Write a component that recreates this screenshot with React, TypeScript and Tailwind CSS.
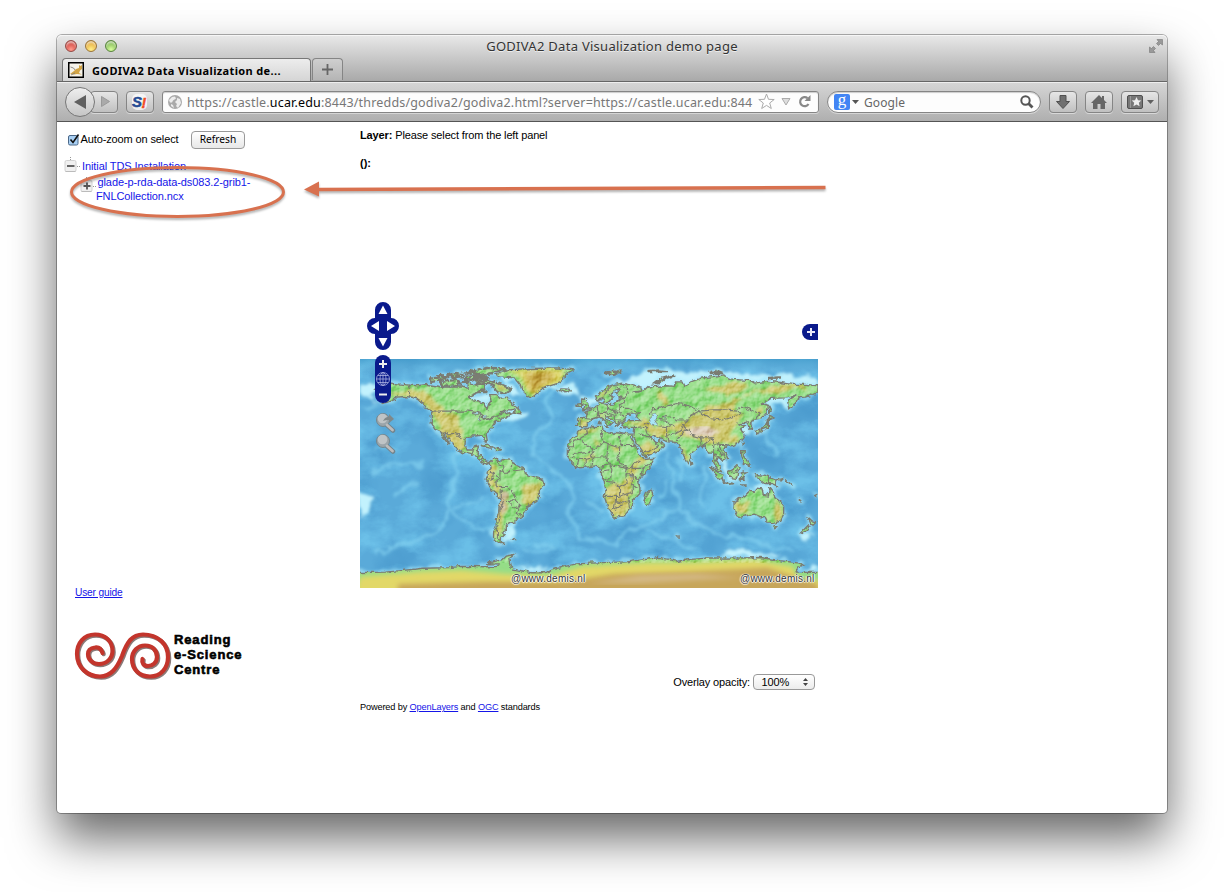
import React from "react";

const pts = (s: string) =>
  s.trim().split(/\s+/).map((p) => { const [x, y] = p.split(",").map(Number); return `${x},${-y}`; }).join(" ");

const LAND = [
  "-168,66 -162,67 -162,70 -156,71 -141,69.5 -134,69 -128,70 -115,68 -108,68 -100,68 -95,67 -95,72 -90,69 -82,69.5 -82,66.5 -87,64 -94,61 -94,58.5 -88,57 -82,55 -82,53 -80,51 -79,54.5 -77,57 -78,62 -73,62 -70,59 -65,60 -61,55.5 -56,52 -60,50 -66,50 -71,47 -65,48.5 -61,46 -66,43.5 -70,43.5 -70,41.5 -74,40.5 -76,37 -76,35 -81,31.5 -80,26 -81.5,25.5 -83,29 -85,30 -90,29.5 -94,29.5 -97,27.5 -97.5,22 -95,18.5 -91,18.5 -90,21 -87,21.5 -88,16 -84,15.5 -83.5,11 -80,9 -77.5,8.5 -79,7.5 -83,8 -86,10.5 -88,13 -93,15 -97,16 -102,18 -105.5,20 -106,23 -109,26 -113,31 -114.5,31 -112,27 -110,23.5 -112,25 -115,29 -117,33 -120.5,34.5 -124,40 -124,46.5 -123,49 -128,51 -131,55 -135,58.5 -139,60 -146,60.5 -151,60 -153,58 -158,56 -163,55 -158,58 -162,59 -165,61 -165,63 -161,64.5 -166,65",
  "-77.5,8 -75,11 -72,12 -71,10 -68,11 -62,10.5 -60,8.5 -55,6 -51,4 -50,0 -44,-2.5 -38,-4 -35,-6 -35,-9 -39,-13 -39,-18 -41,-22 -47,-25 -49,-28 -53,-34 -57,-35 -58,-38 -62,-39 -65,-41 -65,-45 -68,-46 -66,-48 -69,-51 -69,-54 -66,-55 -71,-55 -75,-51 -75,-46 -73,-42 -73,-37 -71,-30 -70,-20 -71,-18 -76,-14 -79,-8 -81,-5 -80,-2 -80,1 -77,4",
  "-17,21 -16,24 -13,28 -9.5,30 -9,33 -6,35.5 -2,35 3,37 10,37 11,34 15,32 20,31 22,33 30,31 34,31 33,28 37,21 39,16 43,12 44,11 51,12 49,7 42,-1 39,-6 40,-11 40,-15 35,-20 35,-24 32,-28 28,-33 20,-35 18,-32 15,-27 12,-18 13,-12 12,-6 9,-1 9,4 5,6 -2,5 -8,4.5 -13,8 -17,14",
  "-9,37 -9,43 -2,43.5 -1,46 -4,48.5 1,50 4,52 8,54 8,57 11,56 12,54 19,54.5 22,57 24,59 29,60 23,60 21,63 25,65.5 22,66 17,62 19,60 16,56 13,55.5 11,59 7,58 5,61 10,64 14,68 20,70 26,71 33,69.5 41,67 40,65 35,64 38,64 44,66 46,68 54,68.5 60,69 67,68.5 68,72 73,72 75,68 80,72 88,75 100,76.5 105,77.5 113,74 127,73 130,71 140,72.5 150,71.5 160,70 170,70 180,69 180,65 177,62.5 170,60 164,59.5 163,56 157,51 156,57 163,62 155,59.5 143,59 136,54.5 141,53 140,48 135,43.5 130,42.5 127,39 129,35 126,35 125,39 121,39.5 118,39 122,37 119,35 121,32 122,29 118,24 113,22 108,21.5 106,19 109,12 105,9 101,13 99.5,10 103,5 104,1.5 101,3 98,9 98,16 94,16 91,22.5 87,21.5 80,15.5 80,12 77.5,8 73,17 72,21 67,24.5 61,25 57,27 51,29 48,30 51,25 54,24 56,26 59.5,22.5 55,17.5 45,13 43,15 39,21 35,28 36,36 30,36.5 27,37 26,40 32,41.5 41,41.5 37,45 39,47 31,46.5 28,42 26,41 23,40 23,37 20,39 19,42 13,45.5 14,42 18,40 16,38 12,42 8,44.5 3,43 0,39.5 -3,36.7",
  "114,-22 114,-26 116,-34 119,-34.5 124,-33 130,-32 135,-34 138,-34 140,-38 146,-39 150,-37.5 153,-32 153,-26 149,-21 146,-19 145,-15 142,-11 141,-17 137,-16.5 136,-12 132,-11.5 129,-15 126,-14 122,-18",
  "-73,78 -65,81.5 -45,82.5 -25,83 -12,81.5 -19,78 -20,74 -24,71 -32,68.5 -40,65 -43,60 -48,61 -53,66 -54,70 -58,75 -68,76",
  "-180,-77.8 -160,-77.5 -150,-76.5 -130,-74.5 -110,-74 -100,-73 -80,-73.3 -73,-73 -71,-71 -81,-71 -75,-69.5 -68,-68 -65,-65 -58,-63.5 -63,-67 -62,-73 -60,-75 -45,-78 -35,-78 -25,-74.5 -10,-71 10,-70 30,-69.5 45,-67.5 55,-66 70,-69 80,-67.5 95,-66.3 115,-66.5 135,-66 150,-68.5 165,-70.5 169,-72 165,-74 163,-77.5 180,-77.8 186,-78 186,-96 -186,-96 -186,-78",
  "-24,65.5 -22,66.5 -15,66.3 -14,65 -19,63.5", "-5,50 1,51 0,54 -3,56 -2,58 -5,58.5 -5,54 -3,53", "-10,52 -6,52 -6,55 -9,54.5", "44,-25 43,-22 45,-16 49,-12.5 50,-16 47,-25",
  "131,31 131,34 136,35 140,38 140,42 142,45 145,43.5 141,42 141,36 137,34.5", "142,46 142,54 144,50", "80,9 80,6 82,7",
  "95,5.5 98,4 103,0 106,-5.5 102,-4", "105,-6.5 110,-7 114,-8 110,-8.5", "109,1 113,3 117,7 119,5 117,1 116,-4 111,-3", "119,-5 119,0 121,1 125,1.5 121,-1 123,-5 121,-3", "120,18 122,18 122,14 125,10 126,6 122,8 120,14", "131,-1 134,-1 138,-1.5 146,-5 148,-10 144,-8 138,-8 133,-4", "172,-34 175,-37 178,-38 175,-41", "172,-41 174,-42 169,-46.5 167,-46", "145,-41 148,-41 147,-43.5",
  "-85,22 -80,23 -74,20 -78,20", "-74,18 -73,20 -68,18.5", "-59,47.5 -56,51.5 -53,47", "118,-9 124,-9 120,-10", "178,-17 179,-16.5 179,-18", "147,-5 152,-4 150,-6", "154,-5 160,-9 161,-10", "165,-20 167,-22", "-60,-52 -58,-52 -59,-51", "69,-49 70,-49 70,-50", "120,22 121,25 121.5,24", "8,39 9,42 9.5,39", "12,37.5 15,38 15,37", "24,35.5 26,35",
];

const ARCTIC = [
  "-85,77 -92,80 -80,83 -65,82.5 -76,79", "-124,72 -125,74.5 -115,76 -110,75.5 -118,73", "-115,69 -117,72 -105,73.5 -101,69.5", "-90,74 -80,73.7 -72,71 -62,67 -65,63 -72,64 -74,66 -76,70 -88,71", "-98,74 -96,77 -85,76.5 -82,75", "-112,77 -104,79 -98,78 -104,76", "-86,64 -84,66 -80,64", "-99,72 -98,74 -92,73.5 -95,72",
  "-108,75 -104,76.5 -99,75.5", "-97,79 -92,81 -90,78.5", "-91,76 -82,78 -80,76", "-90,69 -86,73 -80,71", "-120,77 -116,77.5 -113,76",
  "52,71 56,74 67,77 60,75 55,71", "12,79 18,80 26,80 18,77", "46,80.5 55,81 62,80.5", "140,75 150,75.5 147,74.5", "95,79 100,81 105,79",
];

const LAKES = ["55,37 50,38 47,43 51,47 54,45 52,41", "-92,47 -88,48.5 -84,46.5 -88,46.5", "-87,42 -86,46 -85,42.5", "-84,46 -80,45 -82,43", "-83,42 -76,44 -79,42.5", "59,44 61,46 60,43", "32,-1 34,0 33,-3"];

const BORDERS = [
  "-141,69.5 -141,60 -135,59 -130,55", "-123,49 -95,49 -88,48 -84,46 -83,42 -79,43 -75,45 -71,45 -69,47", "-117,32.5 -111,31.3 -106,31.5 -101,29 -97,26", "-92,15 -91,18", "-89,14 -84,15", "-86,11 -83,11",
  "-78,1 -75,0 -70,-4 -70,1 -67,1 -67,6 -72,8 -72,11", "-67,1 -63,1 -60,5 -60,8", "-60,2 -52,3 -55,5", "-70,-4 -73,-7 -73,-10 -70,-11 -65,-11 -60,-14 -58,-18 -62,-22 -67,-22 -69,-18 -69,-12", "-58,-18 -57,-22 -54,-25 -58,-27 -63,-22", "-54,-25 -57,-30 -53,-33", "-67,-22 -70,-28 -70,-35 -72,-42 -72,-50 -69,-52", "-80,-3 -76,-5 -75,0",
  "-17,21 -12,21 -12,26 -8,27 -1,31 -2,35", "-8,27 3,19 12,24 9,31 10,34", "-12,15 -5,16 4,17", "12,24 15,23 24,20 25,31", "24,20 24,15 22,12 25,7 31,4", "24,22 37,22", "15,23 14,13 4,13 2,6", "14,13 16,7 10,5", "16,7 25,5 30,4 34,5 36,8 40,11", "36,8 34,4 42,4 48,8", "42,4 41,-1", "34,4 34,-1 39,-5", "30,4 29,-1 30,-8 24,-11 20,-7 13,-6", "29,-1 34,-1 34,-9 39,-11", "24,-11 24,-18 12,-18", "21,-18 20,-28 17,-29", "21,-22 26,-24 31,-22 30,-16 34,-15 34,-9", "26,-24 24,-26 20,-28", "31,-22 32,-27", "24,-18 30,-16", "16,7 18,3 17,-4 12,-5", "16,3 10,2", "-10,4 -8,11 -14,13", "-3,5 -3,11 2,12 4,17", "-8,11 -3,11",
  "-7,37 -7,42", "-2,43 3,42.5", "3,50 8,48 7,44", "6,53 7,50 8,48 13,48 15,51 14,54", "15,51 19,49.5 23,50 24,54", "13,48 17,47 22,48 29,45", "19,49 22,48 21,45 17,46 14,45", "21,45 20,42 28,42", "24,54 28,56 28,59", "24,52 31,52 35,49 40,48", "29,60 30,63 29,69", "21,69 24,66", "12,59 13,64 18,69",
  "48,46 50,51 55,51 61,53 69,55 77,54 83,51 87,49 80,45 78,42 69,42 66,44 58,45 55,42", "87,49 98,50 107,50 116,49 120,53 127,50 131,48 135,48 131,43", "87,49 91,46 96,43 105,42 111,44 120,47 117,49", "55,42 60,42 66,38 61,36 54,37", "78,42 74,38 78,35 81,30 88,28 97,28 98,24 102,22 108,22", "61,36 61,30 62,25", "61,30 67,31 72,34 74,38", "68,24 71,28 75,34 78,35", "44,40 48,39", "36,36 44,37 45,33 48,30", "39,32 45,29 48,29", "43,17 50,19 55,22 52,24", "88,28 89,22 92,24 97,28", "98,24 98,17 100,13", "102,22 105,17 107,12", "100,20 105,15 102,12", "124,40 129,42", "141,-3 141,-9", "109,1 115,1 117,4",
];

const HIGH = [
  "-164,64 -140,66 -128,64 -117,52 -103,46 -99,32 -97,18 -106,20 -118,34 -122,45 -128,53 -140,60",
  "-80,6 -73,8 -76,-3 -70,-14 -64,-20 -67,-30 -70,-52 -74,-48 -73,-30 -72,-18 -80,-7", "-50,-8 -38,-8 -40,-20 -48,-27 -52,-22",
  "12,-10 26,-8 34,6 42,16 44,8 34,-2 34,-18 28,-34 16,-34", "-8,35 9,37 3,32 -8,29", "38,22 45,12 58,20 48,24", "6,46 14,47 10,45", "26,40 44,42 52,36 64,38 62,26 50,30 44,36 36,37", "62,38 76,42 86,50 106,56 120,60 132,64 150,64 172,68 160,71 140,68 125,64 112,50 122,44 112,36 110,24 98,22 84,27 70,30", "6,60 18,68 12,60", "114,-22 128,-22 124,-31 116,-32", "57,68 61,52 56,54", "90,66 110,72 126,68 108,60", "-9,42 -2,42 -3,37 -7,37", "144,-18 153,-28 149,-38 146,-35",
  "2,27 10,24 8,20", "14,24 26,18 19,17", "-62,66 -76,73 -70,64", "105,30 118,30 119,25 106,24", "73,22 75,10 79,14", "130,50 138,52 136,46", "-6,16 4,14 0,10",
];

const RIDGES = [
  "-30,66 -34,56 -30,45 -42,30 -45,15 -25,0 -14,-10 -14,-35 -8,-50 20,-54", "-108,15 -104,0 -110,-20 -112,-36 -130,-52 -170,-63", "-110,-30 -90,-42 -77,-44", "60,15 66,2 67,-12 70,-25 55,-36 38,-45 18,-53", "70,-25 82,-38 105,-48 130,-52 160,-62", "90,5 89,-28", "-170,22 -152,18", "-178,-18 -176,-36", "140,35 142,22 147,13", "-2,-22 10,-30", "46,-44 70,-54 84,-60", "-177,51 -165,54", "58,-5 60,-15 55,-22", "72,12 73,-6", "-45,-54 -28,-57 -32,-61 -52,-60", "-135,-5 -152,-18", "-130,8 -170,2", "-80,-20 -108,-27",
];

const SHELVES = [
  "-180,69 -165,72 -170,60 -161,55 -180,62", "-69,-40 -58,-38 -60,-46 -58,-52 -67,-53", "20,72 50,81 85,80 115,79 150,77 180,75 180,68 70,66 40,66", "135,60 157,62 157,52 145,55 140,50", "98,12 106,8 108,-4 118,-6 116,2 110,4 108,10", "118,40 127,34 122,26 118,32", "128,-10 142,-8 145,-14 135,-18", "-95,62 -78,62 -78,52 -94,57", "-65,55 -45,46 -58,42 -68,41", "-5,50 9,57 4,60 -8,59", "112,-60 150,-64 145,-66 105,-65", "-60,78 -72,76 -58,68 -52,62 -62,62 -66,70", "163,-48 178,-46 170,-52", "-180,-15 -170,-20 -175,-30 -180,-35", "168,-76 180,-77 180,-73", "-35,68 -10,72 -8,60 -20,62", "-60,-73 -30,-74 -45,-78",
];

const SPIRAL = "M28.500 22C27 17 24 16 21 16.500C16 17 14 20 14 23C14 29 19 33 25 33C33 33 38.500 27 38.500 20C38.500 10 31 3.500 21 3.500C10 3.500 3 12 3 23C3 36 13 45.500 26 45.500C37 45.500 43 37 48 25C53 11 58 3.500 69 3.500C84 3.500 94 13 94 26C94 37 87 45.500 76 45.500C65 45.500 58 38 58 28C58 20 64 14.500 71 14.500C79 14.500 83 20 83 26C83 32 78 35 74 35C69.500 35 67.500 32 68.500 28";

function WorldMap() {
  const main = LAND.map((s, i) => <polygon key={i} points={pts(s)} />);
  const arctic = ARCTIC.map((s, i) => <polygon key={"a" + i} points={pts(s)} />);
  const polys = [...main, ...arctic];
  return (
    <svg className="absolute left-0 top-[64px] block h-[229px] w-[458px]" viewBox="-180 -90 360 180" preserveAspectRatio="none">
      <defs>
        <clipPath id="frame"><rect x="-180" y="-90" width="360" height="180" /></clipPath>
        <filter id="rough" x="-5%" y="-5%" width="110%" height="110%"><feTurbulence type="fractalNoise" baseFrequency=".24" numOctaves="3" seed="4" /><feDisplacementMap in="SourceGraphic" scale="4" xChannelSelector="R" yChannelSelector="G" /></filter>
        <filter id="soft"><feTurbulence type="fractalNoise" baseFrequency=".12" numOctaves="3" seed="8" result="n" /><feDisplacementMap in="SourceGraphic" in2="n" scale="9" xChannelSelector="R" yChannelSelector="G" /><feGaussianBlur stdDeviation="1.1" /></filter>
        <filter id="smooth" x="-5%" y="-20%" width="110%" height="140%"><feGaussianBlur stdDeviation="2" /></filter>
        <filter id="blur2"><feTurbulence type="fractalNoise" baseFrequency=".08" numOctaves="3" seed="2" result="n" /><feDisplacementMap in="SourceGraphic" in2="n" scale="11" xChannelSelector="R" yChannelSelector="G" /><feGaussianBlur stdDeviation="1.4" /></filter>
        <filter id="clouds" x="0" y="0" width="100%" height="100%" colorInterpolationFilters="sRGB"><feTurbulence type="fractalNoise" baseFrequency=".035 .05" numOctaves="5" seed="11" /><feColorMatrix values="0 0 0 0 .47  0 0 0 0 .81  0 0 0 0 .95  3 0 0 0 -1.2" /></filter>
        <filter id="deep" x="0" y="0" width="100%" height="100%" colorInterpolationFilters="sRGB"><feTurbulence type="fractalNoise" baseFrequency=".03" numOctaves="3" seed="31" /><feColorMatrix values="0 0 0 0 .26  0 0 0 0 .57  0 0 0 0 .78  0 2.8 0 0 -1.2" /></filter>
        <filter id="relief" x="0" y="0" width="100%" height="100%" colorInterpolationFilters="sRGB"><feTurbulence type="fractalNoise" baseFrequency=".13" numOctaves="4" seed="5" result="n" /><feColorMatrix in="n" values="0 0 0 0 0 0 0 0 0 0 0 0 0 0 0 1 0 0 0 0" /><feDiffuseLighting surfaceScale="2" lightingColor="#fff"><feDistantLight azimuth="225" elevation="33" /></feDiffuseLighting></filter>
        <mask id="landmask"><g fill="#fff" filter="url(#rough)">{polys}</g></mask>
        <linearGradient id="north" x2="0" y2="1"><stop offset="0" stopColor="#3f9ac9" stopOpacity=".6" /><stop offset="1" stopColor="#7cc8e8" stopOpacity="0" /></linearGradient>
      </defs>
      <g clipPath="url(#frame)">
        <rect x="-180" y="-90" width="360" height="180" fill="#5aaad9" />
        <rect x="-180" y="-90" width="360" height="180" filter="url(#deep)" opacity=".55" />
        <rect x="-180" y="-90" width="360" height="180" filter="url(#clouds)" opacity=".6" />
        <rect x="-180" y="-90" width="360" height="12" fill="url(#north)" />
        <g fill="none" stroke="#86d4f2" strokeWidth="2.600" opacity=".65" filter="url(#blur2)">{RIDGES.map((s, i) => <polyline key={i} points={pts(s)} />)}</g>
        <g fill="#c2f2fd" filter="url(#soft)">{SHELVES.map((s, i) => <polygon key={i} points={pts(s)} />)}</g>
        <g fill="none" stroke="#a8e8fa" strokeWidth="3" strokeLinejoin="round" filter="url(#soft)" opacity=".75">{polys}</g>
        <g mask="url(#landmask)">
          <rect x="-180" y="-90" width="360" height="180" fill="#95dd87" />
          <g fill="#d3c76c" filter="url(#soft)" opacity=".92">{HIGH.map((s, i) => <polygon key={i} points={pts(s)} />)}</g>
          <polygon filter="url(#soft)" fill="#ddcdba" points={pts("72,36 80,36 92,36 102,33 96,29 84,29")} />
          <polygon filter="url(#soft)" fill="#c4b38e" points={pts("-69,-13 -64,-18 -67,-28 -70,-32 -69,-20")} />
          <polygon filter="url(#smooth)" fill="#ded66a" points={pts("-66,82 -20,83 -20,72 -38,65 -43,60 -50,66 -54,76")} />
          <polygon filter="url(#smooth)" fill="#c6a845" points={pts("-50,79 -30,80 -27,75 -37,69 -44,64 -48,70")} />
          <polygon filter="url(#smooth)" fill="#e2d868" points={pts("-180,-81 -130,-77 -100,-76 -65,-79 -30,-80 -5,-73 45,-70 80,-70 130,-68 160,-73 165,-84 185,-84 185,-95 -185,-95")} />
          <polygon filter="url(#smooth)" fill="#c7a65a" points={pts("-150,-87 -80,-85 -20,-85 20,-79 80,-77 140,-74 158,-80 180,-87 180,-95 -150,-95")} />
          <polygon filter="url(#smooth)" fill="#d4b986" points={pts("0,-86 40,-80 85,-79 120,-82 80,-84 40,-86")} />
          <rect x="-180" y="-90" width="360" height="160" filter="url(#relief)" className="mix-blend-soft-light" opacity=".85" />
        </g>
        <g fill="#a8e4f5" stroke="#7c7f78" strokeWidth=".7" filter="url(#rough)">{LAKES.map((s, i) => <polygon key={i} points={pts(s)} />)}</g>
        <g fill="none" stroke="#7a7b72" strokeWidth="1.05" filter="url(#rough)">
          {main}
          <g strokeWidth="1.900" strokeDasharray="5 .7">{arctic}</g>
          {BORDERS.map((s, i) => <polyline key={"b" + i} points={pts(s)} strokeWidth=".85" />)}
        </g>
      </g>
    </svg>
  );
}

function Magnifier({ arrow }: { arrow?: boolean }) {
  return (
    <svg width="21" height="22" viewBox="0 0 21 22" className="block">
      <path d="M12 13l6 5.500" stroke="#71838c" strokeWidth="4.500" strokeLinecap="round" />
      <circle cx="8" cy="8" r="6.500" fill="#9ba5aa" stroke="#74868e" />
      <circle cx="7.500" cy="6.500" r="4.800" fill="#bfc4c6" />
      <path d="M12 13l5.500 5" stroke="#bcbcbc" strokeWidth="2.800" strokeLinecap="round" />
      {arrow && <path d="M8 9c2-4 4-4 6-4V2l5 5-5 4V8c-3 0-4 0-6 1z" fill="#7f8889" />}
    </svg>
  );
}

function Mark({ className }: { className: string }) {
  return <div className={"absolute font-['Liberation_Sans',sans-serif] text-[10px] leading-[12px] tracking-[.25px] text-[#333] [text-shadow:0_0_1px_#fff,1px_0_1px_#fff,0_1px_1px_#fff,-1px_0_1px_#fff] " + className}>@www.demis.nl</div>;
}

const btn = "flex h-[22px] items-center justify-center rounded-[4px] border border-[#858585] bg-gradient-to-b from-[#e6e6e6] to-[#c0c0c0] shadow-[0_1px_0_#d8d8d8]";

function TreeBox({ plus }: { plus?: boolean }) {
  return (
    <svg width="17" height="16" viewBox="0 0 17 16" className="block shrink-0">
      <path d="M6.500 0v3M13 9.500h4" stroke="#999" strokeDasharray="1 1" />
      <rect x="1" y="3.500" width="11" height="11" rx="1.500" fill="#f0f0f0" stroke="#d2d2d2" />
      <path d="M1.500 14.500h10" stroke="#bbb" />
      <path d={plus ? "M3.500 9h7M7 5.500v7" : "M3 9h7.500"} stroke="#555" strokeWidth="1.800" />
    </svg>
  );
}

export default function App() {
  return (
    <div className="h-[892px] w-[1224px] overflow-hidden bg-white pl-[57px] pt-[35px] font-['Liberation_Sans',sans-serif] text-[11px] text-black">
      <div className="relative h-[778px] w-[1110px] rounded-t-[5px] rounded-b-[4px] bg-white shadow-[0_0_0_1px_rgba(0,0,0,.3),0_25px_48px_rgba(0,0,0,.6)]">
        <header className="flex h-[47px] flex-col rounded-t-[5px] border-b border-[#666] bg-gradient-to-b from-[#e9e9e9] to-[#a9a9a9] font-['Noto_Sans',sans-serif] shadow-[inset_0_1px_0_#f6f6f6]">
          <div className="grid h-[24px] grid-cols-[1fr_auto_1fr] items-center">
            <div className="flex gap-[8px] pb-[2px] pl-[8px]">
              <i className="size-[12px] rounded-full border border-[#934a45] bg-[radial-gradient(circle_at_50%_85%,#ff9c8e,#dc5850_55%,#a8423b)] shadow-[inset_0_2px_2px_#ffffff99]" />
              <i className="size-[12px] rounded-full border border-[#9a7538] bg-[radial-gradient(circle_at_50%_85%,#fff08c,#ebb648_60%,#b47f28)] shadow-[inset_0_2px_2px_#ffffff99]" />
              <i className="size-[12px] rounded-full border border-[#59843e] bg-[radial-gradient(circle_at_50%_85%,#d9ff9f,#8fc460_60%,#5b9038)] shadow-[inset_0_2px_2px_#ffffff99]" />
            </div>
            <div className="pt-[1px] text-[13px] tracking-[.28px] text-[#333] [text-shadow:0_1px_0_#eee]">GODIVA2 Data Visualization demo page</div>
            <svg className="mb-[2px] ml-auto mr-[4px]" width="14" height="14" viewBox="0 0 14 14"><path d="M8 .500h5.500V6l-2-1.500-2 2-2-2 2-2zM.500 8l2 1.500 2-2 2 2-2 2L6 13.500H.500z" fill="#999" stroke="#777" strokeWidth=".6" /></svg>
          </div>
          <div className="flex h-[23px] pl-[5px]">
            <div className="relative -mb-px flex h-[23px] w-[249px] items-center rounded-t-[4px] border border-b-0 border-[#777] bg-gradient-to-b from-[#ededed] to-[#d5d5d5] pl-[5px]">
              <svg width="16" height="16" viewBox="0 0 16 16"><rect x=".75" y=".75" width="14.500" height="14.500" fill="#f6f3ea" stroke="#000" strokeWidth="1.500" /><path d="M2 12l4-3 2-2 3-1V3l1.500 1L14 3v4l-2 1.500-1 2.500 3 1.500-5-.5-3 .5z" fill="#d2a445" /><path d="M2.500 5l3 1 1.500 2M3 13l4-2" fill="none" stroke="#777" strokeWidth=".8" /></svg>
              <span className="ml-[8px] whitespace-nowrap pt-[1px] text-[11px] font-bold tracking-[.36px]">GODIVA2 Data Visualization de...</span>
            </div>
            <div className="ml-[1px] flex h-[22px] w-[31px] items-center justify-center rounded-t-[4px] border border-b-0 border-[#858585] bg-gradient-to-b from-[#cfcfcf] to-[#b5b5b5]">
              <svg width="11" height="11"><path d="M5.500 0v11M0 5.500h11" stroke="#666" strokeWidth="1.800" /></svg>
            </div>
          </div>
        </header>
        <div className="flex h-[40px] items-center border-b border-[#555] bg-gradient-to-b from-[#d6d6d6] to-[#afafaf] pl-[8px] font-['Noto_Sans',sans-serif] shadow-[inset_0_1px_0_#eee]">
          <div className="relative z-10 flex size-[30px] shrink-0 items-center justify-center rounded-full border border-[#777] bg-gradient-to-b from-[#eee] to-[#c5c5c5]">
            <svg width="12" height="14"><path d="M12 0v14L0 7z" fill="#606060" /></svg>
          </div>
          <div className={btn + " -ml-[5px] w-[28px] shrink-0 pl-[3px]"}><svg width="9" height="11"><path d="M.5.5v10L8.500 5.500z" fill="#aaa" stroke="#999" /></svg></div>
          <div className={btn + " ml-[8px] w-[28px] shrink-0"}>
            <svg width="18" height="16" viewBox="0 0 18 16"><rect x="1" width="15" height="16" rx="5" fill="#fff" opacity=".7" /><text x="1" y="13" fontFamily="Liberation Sans" fontWeight="700" fontStyle="italic" fontSize="15" fill="#254b93" stroke="#254b93" strokeWidth=".5">S</text><text x="10.500" y="14" fontFamily="Liberation Sans" fontWeight="700" fontStyle="italic" fontSize="14" fill="#f04d25" stroke="#f04d25" strokeWidth=".5">!</text></svg>
          </div>
          <div className="ml-[8px] flex h-[22px] w-[657px] shrink-0 items-center rounded-[3px] border border-[#858585] bg-[#fdfdfd] pl-[5px] shadow-[inset_0_1px_1px_#ccc,0_1px_0_#d5d5d5]">
            <svg width="14" height="14" viewBox="0 0 14 14" className="shrink-0"><circle cx="7" cy="7" r="7" fill="#aaa" /><path d="M1 5l3-3 3-.5 1 2-3 2-1 2-2 0zM9 3l3 1 1 4-3 5-2-2 1-2-2-2 2-2zM3 9l2 1 1 3-3-2z" fill="#ededed" /></svg>
            <span className="ml-[5px] w-[569px] shrink-0 overflow-hidden whitespace-nowrap pt-[2px] text-[12.500px] leading-[18px] tracking-[.175px] text-[#777]">https://castle.<span className="text-black">ucar.edu</span>:8443/thredds/godiva2/godiva2.html?server=https://castle.ucar.edu:844</span>
            <svg className="ml-[2px] shrink-0" width="17" height="17" viewBox="0 0 17 17"><path d="M8.500 1l2 5.300 5.700.2-4.500 3.500 1.600 5.500-4.800-3.100-4.800 3.100 1.600-5.500L.8 6.500l5.700-.2z" fill="#fff" stroke="#aaa" /></svg>
            <svg className="ml-[6px] shrink-0" width="10" height="8"><path d="M1 .5h8L5 7z" fill="#ddd" stroke="#aaa" /></svg>
            <svg className="ml-[7px] shrink-0" width="13" height="13" viewBox="0 0 13 13"><path d="M9.500 3.200A4.500 4.500 0 1 0 10.500 9" fill="none" stroke="#888" strokeWidth="2.200" /><path d="M12.500 0v6h-6z" fill="#888" /></svg>
          </div>
          <div className="ml-[8px] flex h-[22px] w-[214px] shrink-0 items-center rounded-full border border-[#858585] bg-[#fdfdfd] pl-[6px] pr-[6px] shadow-[inset_0_1px_1px_#ccc,0_1px_0_#d5d5d5]">
            <div className="flex size-[16px] items-center justify-center rounded-[2px] bg-[#4285f4] pb-[4px] font-['Liberation_Serif',serif] text-[17px] leading-none text-white">g</div>
            <svg className="ml-[2px]" width="7" height="4"><path d="M0 0h7L3.500 4z" fill="#555" /></svg>
            <span className="ml-[5px] pt-[2px] text-[12px] leading-[18px] tracking-[.1px] text-[#666]">Google</span>
            <svg className="ml-auto" width="14" height="14"><circle cx="5.500" cy="5.500" r="4.200" fill="none" stroke="#555" strokeWidth="2" /><path d="M8.500 8.500L12.500 12.500" stroke="#555" strokeWidth="2.800" /></svg>
          </div>
          <div className={btn + " ml-[8px] w-[28px] shrink-0"}><svg width="14" height="14"><path d="M4 .500h6v6h3.500L7 13.500.500 6.500H4z" fill="#707070" stroke="#505050" /></svg></div>
          <div className={btn + " ml-[8px] w-[28px] shrink-0"}><svg width="16" height="14"><path d="M8 0l3 3V1h2v4l3 3h-2v6H9.500V9h-3v5H2V8H0z" fill="#666" /></svg></div>
          <div className={btn + " ml-[8px] w-[38px] shrink-0 gap-[4px]"}><svg width="16" height="14"><rect x=".5" y=".5" width="15" height="13" rx="1.500" fill="#777" stroke="#505050" /><path d="M3.500 1v12" stroke="#999" /><path d="M9.500 2l1.500 3.200 3.300.2-2.500 2.400.8 3.500-3.100-1.800-3.100 1.800.8-3.500-2.500-2.400 3.300-.2z" fill="#eee" /></svg><svg width="7" height="4"><path d="M0 0h7L3.500 4z" fill="#606060" /></svg></div>
        </div>

        <main className="flex">
          <aside className="flex w-[303px] shrink-0 flex-col">
            <div className="flex h-[20px] items-center pl-[11px] pt-[16px]">
              <svg width="12" height="12" viewBox="0 0 12 12"><rect x=".5" y="1.500" width="9.500" height="9.500" rx="1.500" fill="#a9d0f4" stroke="#4b6888" /><path d="M2.500 5.500l2.500 3L10.500.5" fill="none" stroke="#111" strokeWidth="1.600" /></svg>
              <span className="ml-[.5px] whitespace-nowrap pb-[2px] leading-[14px] tracking-[-.12px]">Auto-zoom on select</span>
              <span className="ml-[12.500px] flex h-[18px] w-[54px] shrink-0 items-center justify-center rounded-[4px] border border-[#999] bg-gradient-to-b from-white to-[#e8e8e8] font-['Noto_Sans',sans-serif] text-[10.200px]">Refresh</span>
            </div>
            <div className="mt-[15px] flex h-[16px] items-start pl-[7px] text-[#1515e8]"><TreeBox /><span className="ml-[1px] pt-[2px] leading-[14px] tracking-[-.09px]">Initial TDS Installation</span></div>
            <div className="mt-[4px] flex items-start pl-[23px] text-[#1515e8]"><TreeBox plus /><span className="-ml-px -mt-[3px] whitespace-nowrap pt-[1px] leading-[14px] tracking-[-.1px]"><span className="pl-[1.500px]">glade-p-rda-data-ds083.2-grib1-</span><br />FNLCollection.ncx</span></div>
            <a className="ml-[18px] mt-[383px] text-[10.200px] leading-[14px] tracking-[-.18px] text-[#1515e8] underline">User guide</a>
            <div className="ml-[17px] mt-[31px] flex items-center">
              <svg width="99" height="50" viewBox="0 0 99 50" className="shrink-0">
                <g fill="none" strokeLinecap="round" strokeWidth="4.200">
                  <path transform="translate(1.200 1.200)" stroke="#8a7a78" d={SPIRAL} />
                  <path stroke="#c3352c" d={SPIRAL} />
                </g>
              </svg>
              <div className="mb-[1px] ml-[1px] text-[13px] font-bold leading-[14.700px] tracking-[.85px] [-webkit-text-stroke:.6px_#000]">Reading<br />e-Science<br />Centre</div>
            </div>
          </aside>

          <section className="flex w-[458px] flex-col">
            <div className="mt-[6px] leading-[14px] tracking-[-.13px]"><b>Layer:</b> Please select from the left panel</div>
            <b className="mt-[14px] leading-[14px]">():</b>
            <div className="relative mt-[125px] h-[360px]">
              <WorldMap />
              <Mark className="left-[151px] top-[278px]" />
              <Mark className="left-[380px] top-[278px]" />
              <svg className="absolute left-[7px] top-[7px]" width="32" height="48" viewBox="0 0 32 48"><path d="M8 8a8 8 0 0 1 16 0v8a8 8 0 0 1 0 16v8a8 8 0 0 1-16 0v-8a8 8 0 0 1 0-16z" fill="#0a1a8c" /><path d="M16 3.500l4.500 8.500h-9zM16 44.500l4.500-8.500h-9zM4 24l8-5v10zM28 24l-8-5v10z" fill="#fff" /></svg>
              <svg className="absolute left-[15px] top-[60px]" width="16" height="48" viewBox="0 0 16 48"><rect width="16" height="48" rx="8" fill="#0a1a8c" /><path d="M4 9h8M8 5v8M4 39.500h8" stroke="#eee" strokeWidth="2" /><g fill="none" stroke="#a9b0df" strokeWidth=".8"><circle cx="8" cy="24" r="6.500" /><ellipse cx="8" cy="24" rx="3" ry="6.500" /><path d="M8 17.500v13M1.500 24h13M3 20.500h10M3 27.500h10" /></g></svg>
              <div className="absolute left-[15px] top-[117px]"><Magnifier arrow /></div>
              <div className="absolute left-[15px] top-[138px]"><Magnifier /></div>
              <svg className="absolute right-0 top-[29px]" width="16" height="16"><path d="M16 0v16H8A8 8 0 0 1 8 0z" fill="#0a1a8c" /><path d="M5 8h8M9 4v8" stroke="#e8e8f8" strokeWidth="2" /></svg>
            </div>
            <div className="mt-[19px] flex h-[16px] items-center justify-end pr-[3px]">
              <span className="mr-[3px] tracking-[-.13px]">Overlay opacity:</span>
              <span className="flex h-[16px] w-[62px] items-center rounded-[4px] border border-[#999] bg-gradient-to-b from-white to-[#ececec] pl-[7.500px] pr-[6px] tracking-[-.1px]">100%<svg className="ml-auto" width="5" height="8"><path d="M2.500 0L5 3H0zM2.500 8L5 5H0z" fill="#444" /></svg></span>
            </div>
            <div className="mt-[10px] text-[9.200px] leading-[14px] tracking-[-.14px]">Powered by <a className="text-[#1515e8] underline">OpenLayers</a> and <a className="text-[#1515e8] underline">OGC</a> standards</div>
          </section>
        </main>

        <svg className="absolute left-[8px] top-[125px] [filter:drop-shadow(0_2px_1px_rgba(0,0,0,.3))]" width="770" height="64" viewBox="65 160 770 64">
          <ellipse cx="177.500" cy="192" rx="106" ry="24.500" fill="none" stroke="#d8714f" strokeWidth="3" />
          <path d="M318 189.500L825.500 187.500" stroke="#d8714f" strokeWidth="3.500" />
          <path d="M304 189.500L319 181.500V196.500z" fill="#d8714f" />
        </svg>
      </div>
    </div>
  );
}
